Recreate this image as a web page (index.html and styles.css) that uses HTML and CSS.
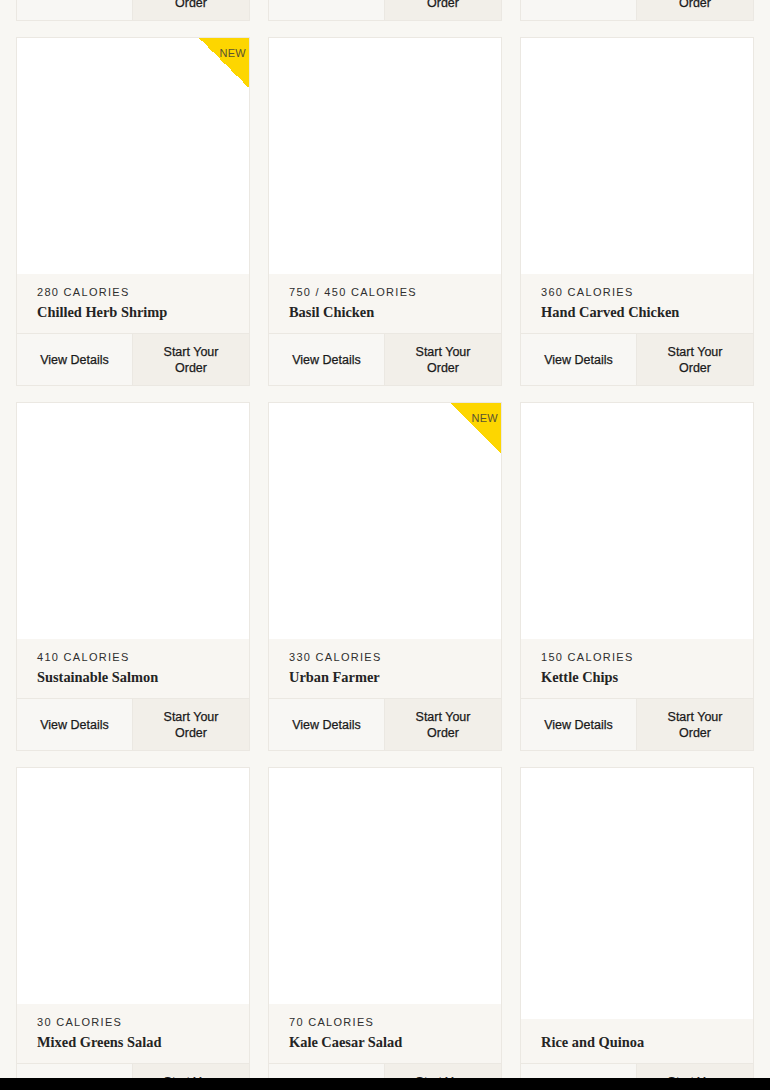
FILE: index.html
```html
<!DOCTYPE html>
<html lang="en">
<head>
<meta charset="utf-8">
<title>Menu</title>
<link rel="stylesheet" href="styles.css">
</head>
<body>
<main class="menu-grid">
  <article class="card">
    <div class="card-image"></div>
    <div class="card-info"><p class="calories">520 CALORIES</p><h3 class="name">Roasted Turkey</h3></div>
    <div class="card-actions"><a class="btn btn-details">View Details</a><a class="btn btn-order">Start Your Order</a></div>
  </article>
  <article class="card">
    <div class="card-image"></div>
    <div class="card-info"><p class="calories">640 CALORIES</p><h3 class="name">Grilled Steak</h3></div>
    <div class="card-actions"><a class="btn btn-details">View Details</a><a class="btn btn-order">Start Your Order</a></div>
  </article>
  <article class="card">
    <div class="card-image"></div>
    <div class="card-info"><p class="calories">480 CALORIES</p><h3 class="name">Crispy Chicken</h3></div>
    <div class="card-actions"><a class="btn btn-details">View Details</a><a class="btn btn-order">Start Your Order</a></div>
  </article>

  <article class="card">
    <div class="card-image"><span class="badge-new"><span class="badge-text">NEW</span></span></div>
    <div class="card-info"><p class="calories">280 CALORIES</p><h3 class="name">Chilled Herb Shrimp</h3></div>
    <div class="card-actions"><a class="btn btn-details">View Details</a><a class="btn btn-order">Start Your Order</a></div>
  </article>
  <article class="card">
    <div class="card-image"></div>
    <div class="card-info"><p class="calories">750 / 450 CALORIES</p><h3 class="name">Basil Chicken</h3></div>
    <div class="card-actions"><a class="btn btn-details">View Details</a><a class="btn btn-order">Start Your Order</a></div>
  </article>
  <article class="card">
    <div class="card-image"></div>
    <div class="card-info"><p class="calories">360 CALORIES</p><h3 class="name">Hand Carved Chicken</h3></div>
    <div class="card-actions"><a class="btn btn-details">View Details</a><a class="btn btn-order">Start Your Order</a></div>
  </article>

  <article class="card">
    <div class="card-image"></div>
    <div class="card-info"><p class="calories">410 CALORIES</p><h3 class="name">Sustainable Salmon</h3></div>
    <div class="card-actions"><a class="btn btn-details">View Details</a><a class="btn btn-order">Start Your Order</a></div>
  </article>
  <article class="card">
    <div class="card-image"><span class="badge-new"><span class="badge-text">NEW</span></span></div>
    <div class="card-info"><p class="calories">330 CALORIES</p><h3 class="name">Urban Farmer</h3></div>
    <div class="card-actions"><a class="btn btn-details">View Details</a><a class="btn btn-order">Start Your Order</a></div>
  </article>
  <article class="card">
    <div class="card-image"></div>
    <div class="card-info"><p class="calories">150 CALORIES</p><h3 class="name">Kettle Chips</h3></div>
    <div class="card-actions"><a class="btn btn-details">View Details</a><a class="btn btn-order">Start Your Order</a></div>
  </article>

  <article class="card">
    <div class="card-image"></div>
    <div class="card-info"><p class="calories">30 CALORIES</p><h3 class="name">Mixed Greens Salad</h3></div>
    <div class="card-actions"><a class="btn btn-details">View Details</a><a class="btn btn-order">Start Your Order</a></div>
  </article>
  <article class="card">
    <div class="card-image"></div>
    <div class="card-info"><p class="calories">70 CALORIES</p><h3 class="name">Kale Caesar Salad</h3></div>
    <div class="card-actions"><a class="btn btn-details">View Details</a><a class="btn btn-order">Start Your Order</a></div>
  </article>
  <article class="card">
    <div class="card-image"></div>
    <div class="card-info"><h3 class="name">Rice and Quinoa</h3></div>
    <div class="card-actions"><a class="btn btn-details">View Details</a><a class="btn btn-order">Start Your Order</a></div>
  </article>
</main>
<div class="bottom-bar"></div>
</body>
</html>
```

FILE: styles.css
```css
html, body {
  margin: 0;
  padding: 0;
}

body {
  background: #f8f7f3;
  font-family: "Liberation Sans", Arial, sans-serif;
  color: #222;
}

.menu-grid {
  display: grid;
  grid-template-columns: repeat(3, 234px);
  column-gap: 18px;
  row-gap: 16px;
  padding: 0 16px 40px;
  margin-top: -328px;
}

.card {
  display: flex;
  flex-direction: column;
  border: 1px solid #ebe8e2;
  background: #fff;
}

.card-image {
  position: relative;
  flex: 1 1 auto;
  min-height: 236px;
  background: #fff;
  overflow: hidden;
}

.badge-new {
  position: absolute;
  top: 0;
  right: 0;
  width: 50px;
  height: 50px;
  background: linear-gradient(45deg, transparent 50%, #fdd600 50%);
}

.badge-text {
  position: absolute;
  top: 9px;
  right: 3px;
  font-family: "Liberation Sans", Arial, sans-serif;
  font-size: 11px;
  letter-spacing: 0.3px;
  color: #5a5232;
}

.card-info {
  background: #f8f6f2;
  padding: 12px 20px 10px;
}

.calories {
  margin: 0 0 3px;
  font-size: 11px;
  line-height: 12px;
  letter-spacing: 1.3px;
  color: #2e2e2e;
}

.name {
  margin: 0;
  font-family: "Liberation Serif", "Times New Roman", serif;
  font-weight: bold;
  font-size: 14.4px;
  line-height: 22px;
  color: #242424;
}

.card-actions {
  display: grid;
  grid-template-columns: 1fr 1fr;
  border-top: 1px solid #ebe8e2;
  height: 51px;
}

.btn {
  display: flex;
  align-items: center;
  justify-content: center;
  text-align: center;
  padding: 0 22px;
  font-size: 12.5px;
  line-height: 16px;
  color: #1a1a1a;
  -webkit-text-stroke: 0.25px #1a1a1a;
  text-decoration: none;
}

.btn-details {
  background: #f8f7f4;
  border-right: 1px solid #ebe8e2;
}

.btn-order {
  background: #f2efe9;
}

.bottom-bar {
  position: fixed;
  left: 0;
  right: 0;
  bottom: 0;
  height: 12px;
  background: #000;
}
```
